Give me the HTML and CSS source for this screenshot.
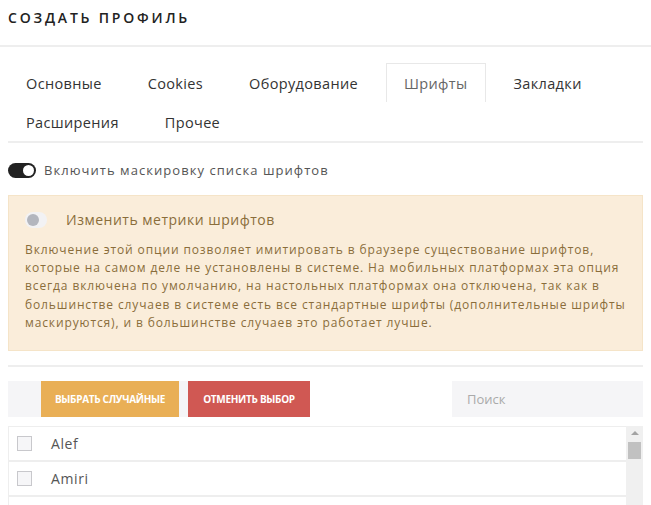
FILE: index.html
```html
<html>
	<head>
		<title>Создать профиль</title>
		<meta charset="utf-8">
		<link rel="stylesheet" href="styles.css">
	</head>
	<body>
		<div class="header">
			<h1 class="title">СОЗДАТЬ ПРОФИЛЬ</h1>
		</div>
		<div class="content">
			<ul class="tabs">
				<li class="tab">Основные</li>
				<li class="tab">Cookies</li>
				<li class="tab">Оборудование</li>
				<li class="tab tab-active">Шрифты</li>
				<li class="tab">Закладки</li>
				<li class="tab">Расширения</li>
				<li class="tab">Прочее</li>
			</ul>
			<label class="switch-row">
				<span class="switch switch-on"><span class="knob"></span></span>
				<span class="switch-label">Включить маскировку списка шрифтов</span>
			</label>
			<div class="warning">
				<label class="switch-row switch-row-warn">
					<span class="switch switch-off"><span class="knob"></span></span>
					<span class="switch-label">Изменить метрики шрифтов</span>
				</label>
				<p class="warning-text">Включение этой опции позволяет имитировать в браузере существование шрифтов, которые на самом деле не установлены в системе. На мобильных платформах эта опция всегда включена по умолчанию, на настольных платформах она отключена, так как в большинстве случаев в системе есть все стандартные шрифты (дополнительные шрифты маскируются), и в большинстве случаев это работает лучше.</p>
			</div>
			<div class="divider"></div>
			<div class="toolbar">
				<div class="buttons">
					<div class="btn btn-yellow">ВЫБРАТЬ СЛУЧАЙНЫЕ</div>
					<div class="btn btn-red">ОТМЕНИТЬ ВЫБОР</div>
				</div>
				<input class="search" type="text" placeholder="Поиск">
			</div>
			<div class="list-wrap">
				<ul class="font-list">
					<li><span class="check"></span>Alef</li>
					<li><span class="check"></span>Amiri</li>
					<li><span class="check"></span></li>
				</ul>
				<div class="scrollbar">
					<span class="arrow"></span>
					<span class="thumb"></span>
				</div>
			</div>
		</div>
	</body>
</html>
```

FILE: styles.css
```css
body {
	margin: 0;
	background: #fff;
	font-family: "Open Sans", "Noto Sans", sans-serif;
	color: #444;
	overflow: hidden;
}
.header {
	border-bottom: 2px solid #eee;
	padding: 9px 8px 0;
	height: 36px;
}
.title {
	margin: 0;
	font-size: 14px;
	font-weight: 600;
	letter-spacing: 2.8px;
	color: #222;
	line-height: 18px;
}
.content {
	padding: 0 8px;
}
.tabs {
	list-style: none;
	margin: 0;
	padding: 16px 0 0;
	display: flex;
	flex-wrap: wrap;
	border-bottom: 2px solid #eee;
}
.tab {
	padding: 0 17px;
	margin-right: 10px;
	height: 39px;
	line-height: 40px;
	font-size: 14.5px;
	letter-spacing: 0.35px;
	color: #333;
	border: 1px solid transparent;
	border-bottom: none;
	box-sizing: border-box;
}
.tab-active {
	border-color: #e8e8e8;
	color: #666;
}
.switch-row {
	display: flex;
	align-items: center;
	padding: 18px 0 16px;
}
.switch {
	width: 28px;
	height: 15px;
	border-radius: 8px;
	position: relative;
	flex: none;
}
.switch-on {
	background: #222;
}
.switch-off {
	background: #f2f2f4;
	width: 22px;
	height: 16px;
}
.knob {
	position: absolute;
	top: 2px;
	width: 11px;
	height: 11px;
	border-radius: 50%;
}
.switch-on .knob {
	right: 2px;
	background: #fff;
}
.switch-off .knob {
	left: 2px;
	top: 2px;
	width: 12px;
	height: 12px;
	background: #b3b6be;
}
.switch-label {
	margin-left: 8px;
	font-size: 13px;
	letter-spacing: 1.05px;
	color: #555;
}
.warning {
	background: #faedda;
	border: 1px solid #f5e4c8;
	padding: 7px 16px 18px;
	color: #8a6d3b;
}
.switch-row-warn {
	padding: 7px 0 12px;
}
.switch-row-warn .switch-label {
	margin-left: 19px;
	font-size: 14px;
	color: #8a6d3b;
	letter-spacing: 0.5px;
}
.warning-text {
	margin: 0;
	font-size: 12px;
	line-height: 18.2px;
	letter-spacing: 0.88px;
}
.divider {
	border-top: 2px solid #eee;
	margin-top: 14px;
}
.toolbar {
	display: flex;
	justify-content: space-between;
	margin-top: 14px;
}
.buttons {
	display: flex;
	background: #f5f5f7;
	padding-left: 33px;
	gap: 9px;
}
.btn {
	height: 36px;
	line-height: 36px;
	font-size: 10px;
	font-weight: 700;
	letter-spacing: -0.3px;
	color: #fff;
	text-align: center;
}
.btn-yellow {
	background: #e9af56;
	width: 138px;
}
.btn-red {
	background: #d05853;
	width: 98px;
	padding: 0 12px;
}
.search {
	width: 191px;
	height: 36px;
	border: none;
	background: #f5f5f7;
	padding: 0 15px;
	box-sizing: border-box;
	font-family: "Open Sans", "Noto Sans", sans-serif;
	font-size: 13px;
	outline: none;
}
.search::placeholder {
	color: #aaa;
}
.list-wrap {
	display: flex;
	margin-top: 9px;
}
.font-list {
	list-style: none;
	margin: 0;
	padding: 0;
	flex: 1;
	border: 1px solid #eee;
	border-right: none;
}
.font-list > li {
	display: flex;
	align-items: center;
	height: 33px;
	border-bottom: 2px solid #eee;
	font-size: 14px;
	letter-spacing: 0.6px;
	color: #555;
}
.check {
	width: 13px;
	height: 13px;
	border: 1px solid #c8c8cc;
	background: #f6f6f8;
	margin: 0 19px 0 8px;
}
.scrollbar {
	width: 17px;
	background: #f0f0f0;
	display: flex;
	flex-direction: column;
	align-items: center;
}
.arrow {
	margin-top: 5px;
	width: 0;
	height: 0;
	border-left: 4px solid transparent;
	border-right: 4px solid transparent;
	border-bottom: 4px solid #a3a3a3;
}
.thumb {
	margin-top: 7px;
	width: 13px;
	height: 17px;
	background: #c1c1c1;
}
```
